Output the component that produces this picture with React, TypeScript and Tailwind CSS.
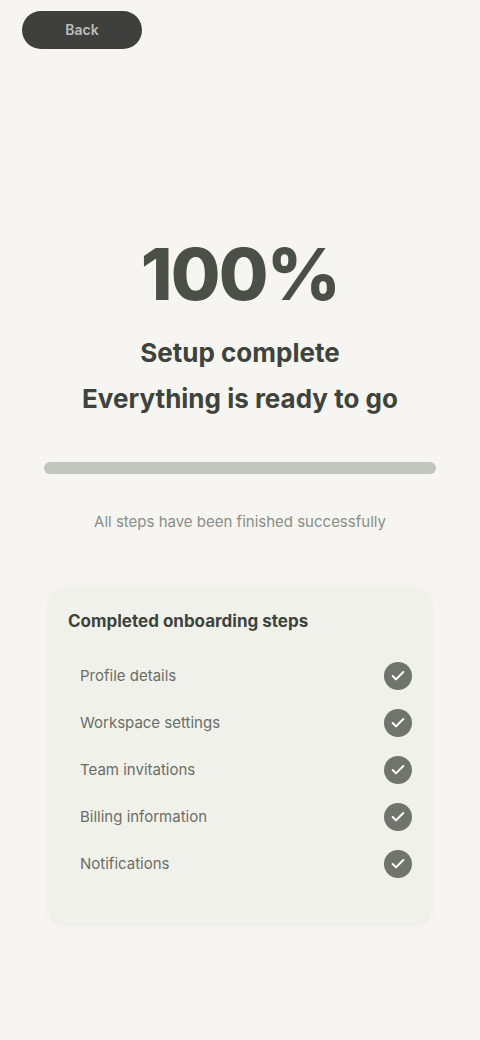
import React from 'react';
import { Check } from 'lucide-react';

const items = [
  'Profile details',
  'Workspace settings',
  'Team invitations',
  'Billing information',
  'Notifications',
];

const App: React.FC = () => {
  return (
    <div
      className="min-h-[1040px] w-full bg-[#f6f5f1] text-[#2e322c]"
      style={{ fontFamily: 'Inter, "Liberation Sans", sans-serif' }}
    >
      <div className="px-[22px] pt-[11px]">
        <button className="flex h-[38px] w-[120px] items-center justify-center rounded-full bg-[#3f403d] text-sm font-semibold text-[#bdbdb8]">
          Back
        </button>
      </div>

      <div className="flex flex-col items-center px-11 pt-[189px]">
        <div className="text-7xl font-extrabold leading-none tracking-tight text-[#4a4f47]">100%</div>

        <h1 className="mt-[20px] max-w-[360px] text-center text-[26px] font-bold leading-[46px] text-[#3e433b]">
          Setup complete
          <br />
          Everything is ready to go
        </h1>

        <div className="mt-10 h-3 w-full rounded-full bg-[#c2c5bc]" />

        <p className="mt-[37px] text-center text-[15px] text-[#8a8e85]">All steps have been finished successfully</p>
      </div>

      <div className="mx-[50px] mt-[53px] rounded-2xl bg-[#f1f1ec] px-[18px] pb-[46px] pt-[22px] shadow-[0_1px_6px_rgba(0,0,0,0.06)]">
        <h2 className="text-[17px] font-bold text-[#3e433b]">Completed onboarding steps</h2>
        <ul className="mt-[28px] flex flex-col gap-[19px] pl-3">
          {items.map((label) => (
            <li key={label} className="flex h-[28px] items-center justify-between">
              <span className="text-[15px] text-[#6a6e65]">{label}</span>
              <span className="flex h-[28px] w-[28px] items-center justify-center rounded-full bg-[#70756b]">
                <Check className="h-4 w-4 text-white" strokeWidth={3} />
              </span>
            </li>
          ))}
        </ul>
      </div>
    </div>
  );
};

export default App;
